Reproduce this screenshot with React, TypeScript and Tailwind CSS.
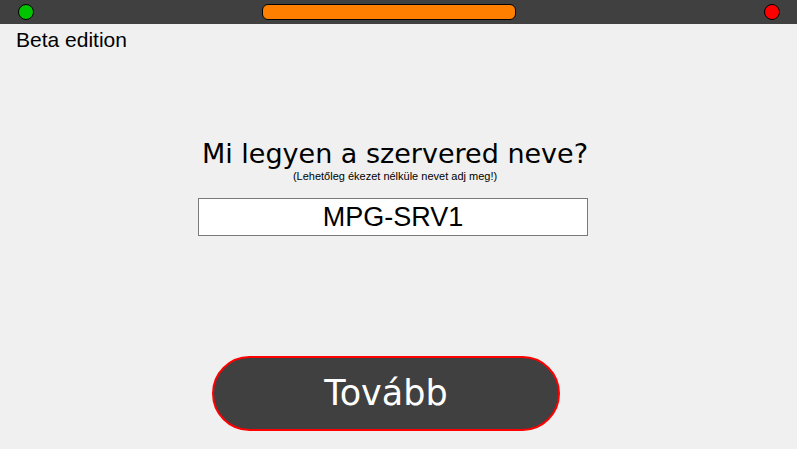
export default function App() {
  return (
    <div className="flex h-[449px] w-[797px] flex-col overflow-hidden bg-[#f0f0f0] font-['Liberation_Sans',Arial,sans-serif]">
      <div className="flex h-6 shrink-0 items-center bg-[#404040]">
        <span className="ml-[18px] h-4 w-4 rounded-full border border-black bg-[#00c400]" />
        <span className="ml-[228px] h-4 w-[254px] rounded-[6px] border border-black bg-[#ff8000]" />
        <span className="ml-auto mr-[17px] h-4 w-4 rounded-full border border-black bg-[#ff0000]" />
      </div>

      <p className="ml-4 mt-[3px] text-[21px] leading-[26px] text-black">Beta edition</p>

      <div className="ml-[200px] mt-[86px] flex w-[390px] flex-col items-center">
        <h1 className="whitespace-nowrap font-['DejaVu_Sans',Verdana,sans-serif] text-[27px] leading-[30px] text-black">
          Mi legyen a szervered neve?
        </h1>
        <p className="mt-[1px] text-[11px] leading-[13px] text-black">
          (Lehetőleg ékezet nélküle nevet adj meg!)
        </p>
      </div>

      <div className="ml-[198px] mt-[15px] flex h-[38px] w-[390px] items-center justify-center border border-[#7a7a7a] bg-white">
        <span className="text-[27px] leading-none text-black">MPG-SRV1</span>
      </div>

      <button className="ml-[212px] mt-[120px] flex h-[75px] w-[348px] items-center justify-center rounded-full border-2 border-[#ff0000] bg-[#404040] font-['DejaVu_Sans',Verdana,sans-serif] text-[35px] text-white">
        Tovább
      </button>
    </div>
  );
}
